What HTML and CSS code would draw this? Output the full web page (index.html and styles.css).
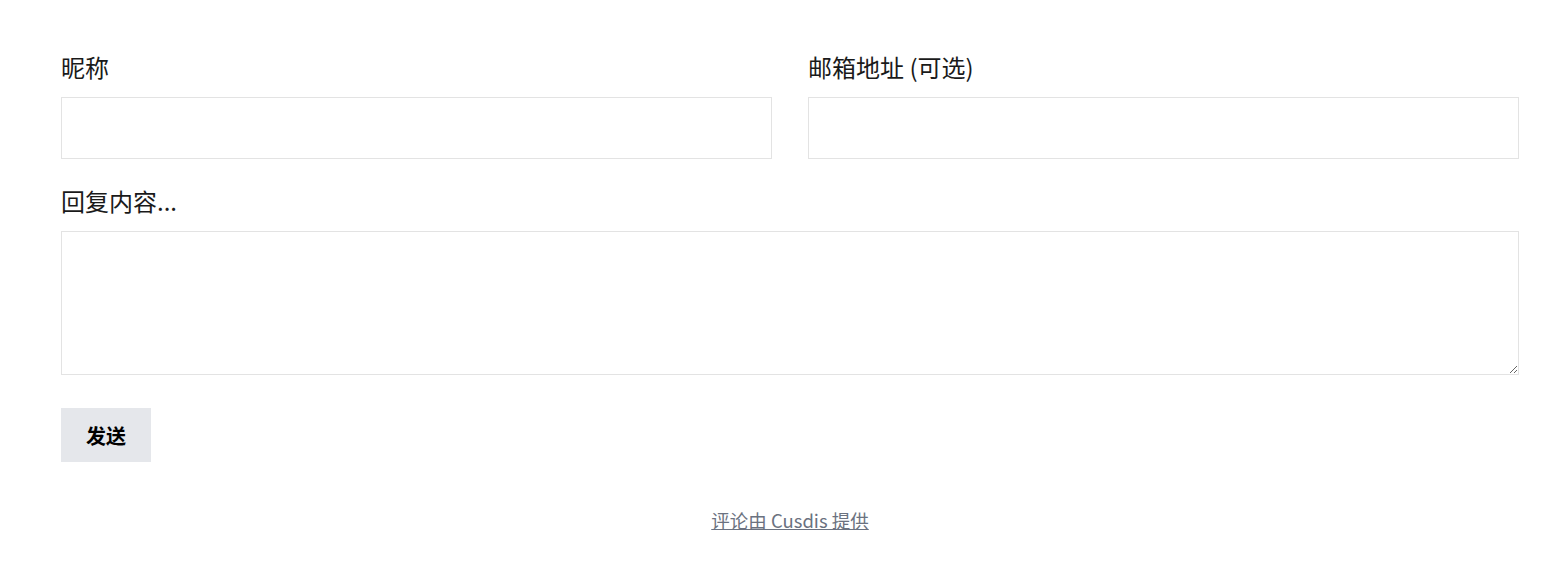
FILE: index.html
```html
<!DOCTYPE html>
<html lang="zh">
<head>
<meta charset="utf-8">
<link rel="stylesheet" href="styles.css">
</head>
<body>
<div class="page">
  <form class="reply-form">
    <div class="row">
      <div class="field">
        <label class="label">昵称</label>
        <input class="input" type="text">
      </div>
      <div class="field">
        <label class="label">邮箱地址 (可选)</label>
        <input class="input" type="email">
      </div>
    </div>
    <div class="field">
      <label class="label">回复内容...</label>
      <textarea class="textarea"></textarea>
    </div>
    <div class="actions">
      <button type="button" class="btn">发送</button>
    </div>
  </form>
  <div class="footer">
    <a class="powered" href="#">评论由 Cusdis 提供</a>
  </div>
</div>
</body>
</html>
```
FILE: styles.css
```css
html, body {
  margin: 0;
  padding: 0;
  background: #fff;
}
body {
  font-family: "Noto Sans CJK SC", "Noto Sans", "Liberation Sans", sans-serif;
  color: #1a1a1a;
}
.page {
  padding: 51px 48px 0 61px;
}
.reply-form {
  display: flex;
  flex-direction: column;
  gap: 26px;
}
.row {
  display: grid;
  grid-template-columns: 1fr 1fr;
  column-gap: 36px;
}
.field {
  display: flex;
  flex-direction: column;
  gap: 14px;
}
.label {
  font-size: 24px;
  line-height: 32px;
  height: 32px;
}
.input {
  box-sizing: border-box;
  height: 62px;
  width: 100%;
  border: 1px solid #e3e3e3;
  margin: 0;
  padding: 8px;
  font-size: 18px;
  outline: none;
}
.textarea {
  box-sizing: border-box;
  height: 144px;
  width: 100%;
  border: 1px solid #e3e3e3;
  margin: 0;
  padding: 8px;
  font-size: 18px;
  resize: vertical;
  display: block;
  outline: none;
}
.actions {
  padding-top: 7px;
}
.btn {
  display: block;
  width: 90px;
  height: 54px;
  border: 0;
  background: #e5e7eb;
  font-family: "Noto Sans CJK SC", "Noto Sans", sans-serif;
  font-weight: 700;
  font-size: 20px;
  color: #000;
  padding: 0;
  cursor: pointer;
}
.footer {
  text-align: center;
  padding-top: 45px;
}
.powered {
  font-size: 18.5px;
  line-height: 26px;
  color: #6b7280;
  text-decoration: underline;
}
```
